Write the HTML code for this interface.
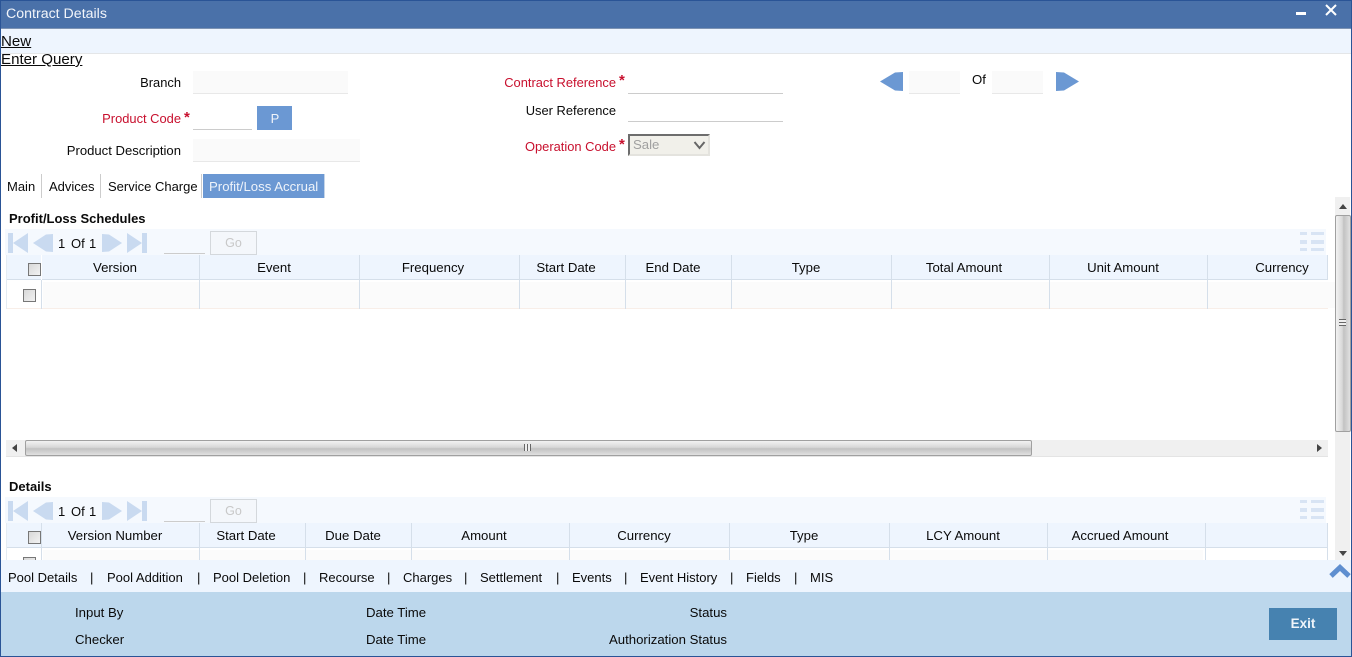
<!DOCTYPE html>
<html><head><meta charset="utf-8">
<style>
html,body{margin:0;padding:0;width:1352px;height:657px;overflow:hidden;background:#fff}
body{position:relative;font-family:"Liberation Sans",Arial,sans-serif;font-size:13.2px;color:#0a0a0a}
.a,.t,.r,.c{position:absolute}
.t,.r,.c{white-space:nowrap;line-height:18px}
.c{transform:translateX(-50%)}
.red{color:#c8102e}
.lb{font-size:12.9px}
.ft{font-size:13px}
.ast{position:absolute;color:#c8102e;font-size:15px;font-weight:bold;line-height:16px}
.inp{position:absolute;background:#fafafa;border-bottom:1px solid #e8e8e8;box-sizing:border-box}
.line{position:absolute;border-bottom:1px solid #ccc;box-sizing:border-box}
.v{position:absolute;width:1px;background:#d5dfea}
.cb{position:absolute;width:13px;height:13px;box-sizing:border-box;border:1px solid #777;background:linear-gradient(135deg,#d8d8d8,#f2f2f2)}
u{text-decoration:underline}
svg{position:absolute;overflow:visible}
</style></head><body>

<!-- title -->
<div class="a" style="left:0;top:0;width:1352px;height:29px;background:#4a71a9;border-top:1px solid #2a5496;border-bottom:1px solid #7d93b3;box-sizing:border-box"></div>
<div class="t" style="left:6px;top:5px;color:#f2f5fa;font-size:14.2px">Contract Details</div>
<div class="a" style="left:1296px;top:12px;width:10px;height:3px;background:#fff"></div>
<svg style="left:1325px;top:4px" width="12" height="12"><path d="M1 1L11 11M11 1L1 11" stroke="#fff" stroke-width="2"/></svg>

<!-- sub bar -->
<div class="a" style="left:0;top:29px;width:1352px;height:25px;background:#eef5fe;border-bottom:1px solid #e4e6e8;box-sizing:border-box"></div>
<div class="t" style="left:1px;top:33px;font-size:15.1px;line-height:18px"><u>New</u></div>
<div class="t" style="left:1px;top:51px;font-size:15.1px;line-height:18px"><u>Enter Query</u></div>

<!-- left form -->
<div class="r lb" style="right:1171px;top:74px">Branch</div>
<div class="inp" style="left:193px;top:71px;width:155px;height:23px"></div>
<div class="r red lb" style="right:1171px;top:110px">Product Code</div>
<div class="ast" style="left:184px;top:110px">*</div>
<div class="line" style="left:193px;top:108px;width:59px;height:22px"></div>
<div class="a" style="left:257px;top:106px;width:35px;height:24px;background:#6b98d3"></div>
<div class="c" style="left:275px;top:110px;color:#f0f4fa;font-size:13px">P</div>
<div class="r" style="right:1171px;top:142px;font-size:13.1px">Product Description</div>
<div class="inp" style="left:193px;top:139px;width:167px;height:23px"></div>

<!-- centre form -->
<div class="r red lb" style="right:736px;top:74px">Contract Reference</div>
<div class="ast" style="left:619px;top:73px">*</div>
<div class="line" style="left:628px;top:71px;width:155px;height:23px"></div>
<div class="r lb" style="right:736px;top:102px">User Reference</div>
<div class="line" style="left:628px;top:99px;width:155px;height:23px"></div>
<div class="r red lb" style="right:736px;top:138px">Operation Code</div>
<div class="ast" style="left:619px;top:137px">*</div>
<div class="a" style="left:628px;top:134px;width:82px;height:22px;box-sizing:border-box;background:#f1f0ea;border:2px solid #e4e3de;border-top-color:#6d6d6d;border-left-color:#6d6d6d"></div>
<div class="t" style="left:633px;top:136px;color:#a0a0a0">Sale</div>
<svg style="left:693px;top:140px" width="13" height="11"><path d="M1.5 2L6.5 8L11.5 2" fill="none" stroke="#666" stroke-width="2"/></svg>

<!-- record nav -->
<svg style="left:880px;top:72px" width="23" height="19"><path d="M0 9.5L15 .5L23 0V19L15 18.5Z" fill="#6b98d3"/></svg>
<div class="inp" style="left:909px;top:71px;width:51px;height:23px"></div>
<div class="t" style="left:972px;top:71px">Of</div>
<div class="inp" style="left:992px;top:71px;width:51px;height:23px"></div>
<svg style="left:1056px;top:72px" width="23" height="19"><path d="M0 0L8 .5L23 9.5L8 18.5L0 19Z" fill="#6b98d3"/></svg>

<!-- tabs -->
<div class="t ft" style="left:7px;top:178px">Main</div>
<div class="v" style="left:41px;top:174px;height:24px;background:#ccc"></div>
<div class="t ft" style="left:49px;top:178px">Advices</div>
<div class="v" style="left:100px;top:174px;height:24px;background:#ccc"></div>
<div class="t ft" style="left:108px;top:178px">Service Charge</div>
<div class="v" style="left:201px;top:174px;height:24px;background:#ccc"></div>
<div class="a" style="left:203px;top:174px;width:122px;height:24px;background:#6b98d3;border-right:1px solid #c5d5e8;box-sizing:border-box"></div>
<div class="t" style="left:209px;top:178px;color:#eef3fa">Profit/Loss Accrual</div>

<!-- Schedules -->
<div class="t" style="left:9px;top:210px;font-weight:bold;font-size:13px">Profit/Loss Schedules</div>
<div class="a" style="left:5px;top:229px;width:1321px;height:26px;background:#f5f9fe"></div>
<svg style="left:8px;top:233px" width="140" height="21" fill="#c9daf0"><path d="M0 0H5V20H0ZM5 10L20 0V20Z"/><path d="M25 10L38 1.5L45 1V19L38 18.5Z"/><path d="M94 1L101 1.5L114 10L101 18.5L94 19Z"/><path d="M119 0L134 10L119 20ZM134 0H139V20H134Z"/></svg>
<div class="t" style="left:58px;top:235px;font-size:13px">1</div><div class="t" style="left:71px;top:235px;font-size:13px">Of</div><div class="t" style="left:89px;top:235px;font-size:13px">1</div>
<div class="line" style="left:164px;top:233px;width:41px;height:21px"></div>
<div class="a" style="left:210px;top:231px;width:47px;height:24px;box-sizing:border-box;background:#f4f7fb;border:1px solid #d4d8dc"></div>
<div class="c" style="left:233.5px;top:234px;color:#c8c8c8;font-size:12.5px">Go</div>
<svg style="left:1300px;top:232px" width="25" height="20" fill="#d8e4f4"><path d="M0 0H7V3H0ZM11 0H24V3H11ZM0 8H7V12H0ZM11 8H24V12H11ZM0 16H7V19H0ZM11 16H24V19H11Z"/></svg>

<div class="a" style="left:6px;top:255px;width:1322px;height:25px;background:#eef5fe;border-bottom:1px solid #d5dfea;box-sizing:border-box"></div>
<div class="a" style="left:43px;top:282px;width:1292px;height:26px;background:#fbfbfb"></div>
<div class="a" style="left:6px;top:308px;width:1322px;height:1px;background:#f8eee8"></div>
<div class="v" style="left:6px;top:255px;height:54px;background:#e4ebf2"></div>
<div class="v" style="left:41px;top:255px;height:54px;background:#fff"></div><div class="v" style="left:41px;top:280px;height:29px"></div>
<div class="v" style="left:199px;top:255px;height:54px"></div>
<div class="v" style="left:359px;top:255px;height:54px"></div>
<div class="v" style="left:519px;top:255px;height:54px"></div>
<div class="v" style="left:625px;top:255px;height:54px"></div>
<div class="v" style="left:731px;top:255px;height:54px"></div>
<div class="v" style="left:891px;top:255px;height:54px"></div>
<div class="v" style="left:1049px;top:255px;height:54px"></div>
<div class="v" style="left:1207px;top:255px;height:54px"></div>
<div class="v" style="left:1327px;top:255px;height:25px"></div>
<div class="cb" style="left:28px;top:263px"></div>
<div class="cb" style="left:23px;top:289px"></div>
<div class="c" style="left:115px;top:259px">Version</div>
<div class="c" style="left:274px;top:259px">Event</div>
<div class="c" style="left:433px;top:259px">Frequency</div>
<div class="c" style="left:566px;top:259px">Start Date</div>
<div class="c" style="left:673px;top:259px">End Date</div>
<div class="c" style="left:806px;top:259px">Type</div>
<div class="c" style="left:964px;top:259px">Total Amount</div>
<div class="c" style="left:1123px;top:259px">Unit Amount</div>
<div class="c" style="left:1282px;top:259px">Currency</div>

<!-- horizontal scrollbar -->
<div class="a" style="left:6px;top:440px;width:1322px;height:17px;background:#f0f0f0;border-bottom:1px solid #e4e4e4;box-sizing:border-box"></div>
<svg style="left:12px;top:444px" width="6" height="8"><path d="M0 4L5 0V8Z" fill="#444"/></svg>
<svg style="left:1317px;top:444px" width="6" height="8"><path d="M5 4L0 0V8Z" fill="#444"/></svg>
<div class="a" style="left:25px;top:440px;width:1007px;height:16px;box-sizing:border-box;border:1px solid #a0a0a0;border-radius:2px;background:linear-gradient(#f2f2f2,#d8d8d8 45%,#c2c2c2 55%,#e0e0e0)"></div>
<div class="a" style="left:524px;top:444px;width:7px;height:7px;background:repeating-linear-gradient(90deg,#666 0,#666 1px,#eee 1px,#eee 3px)"></div>

<!-- Details -->
<div class="t" style="left:9px;top:478px;font-weight:bold;font-size:13px">Details</div>
<div class="a" style="left:5px;top:497px;width:1321px;height:26px;background:#f5f9fe"></div>
<svg style="left:8px;top:501px" width="140" height="21" fill="#c9daf0"><path d="M0 0H5V20H0ZM5 10L20 0V20Z"/><path d="M25 10L38 1.5L45 1V19L38 18.5Z"/><path d="M94 1L101 1.5L114 10L101 18.5L94 19Z"/><path d="M119 0L134 10L119 20ZM134 0H139V20H134Z"/></svg>
<div class="t" style="left:58px;top:503px;font-size:13px">1</div><div class="t" style="left:71px;top:503px;font-size:13px">Of</div><div class="t" style="left:89px;top:503px;font-size:13px">1</div>
<div class="line" style="left:164px;top:501px;width:41px;height:21px"></div>
<div class="a" style="left:210px;top:499px;width:47px;height:24px;box-sizing:border-box;background:#f4f7fb;border:1px solid #d4d8dc"></div>
<div class="c" style="left:233.5px;top:502px;color:#c8c8c8;font-size:12.5px">Go</div>
<svg style="left:1300px;top:500px" width="25" height="20" fill="#d8e4f4"><path d="M0 0H7V3H0ZM11 0H24V3H11ZM0 8H7V12H0ZM11 8H24V12H11ZM0 16H7V19H0ZM11 16H24V19H11Z"/></svg>

<div class="a" style="left:6px;top:523px;width:1322px;height:25px;background:#eef5fe;border-bottom:1px solid #d5dfea;box-sizing:border-box"></div>
<div class="a" style="left:43px;top:550px;width:1160px;height:10px;background:#fbfbfb"></div>
<div class="v" style="left:6px;top:523px;height:37px;background:#e4ebf2"></div>
<div class="v" style="left:41px;top:523px;height:37px"></div>
<div class="v" style="left:199px;top:523px;height:37px"></div>
<div class="v" style="left:305px;top:523px;height:37px"></div>
<div class="v" style="left:411px;top:523px;height:37px"></div>
<div class="v" style="left:569px;top:523px;height:37px"></div>
<div class="v" style="left:729px;top:523px;height:37px"></div>
<div class="v" style="left:889px;top:523px;height:37px"></div>
<div class="v" style="left:1047px;top:523px;height:37px"></div>
<div class="v" style="left:1205px;top:523px;height:37px"></div>
<div class="v" style="left:1327px;top:523px;height:37px"></div>
<div class="cb" style="left:28px;top:531px"></div>
<div class="cb" style="left:23px;top:557px"></div>
<div class="c" style="left:115px;top:527px">Version Number</div>
<div class="c" style="left:246px;top:527px">Start Date</div>
<div class="c" style="left:353px;top:527px">Due Date</div>
<div class="c" style="left:484px;top:527px">Amount</div>
<div class="c" style="left:644px;top:527px">Currency</div>
<div class="c" style="left:804px;top:527px">Type</div>
<div class="c" style="left:963px;top:527px">LCY Amount</div>
<div class="c" style="left:1120px;top:527px">Accrued Amount</div>

<!-- vertical scrollbar -->
<div class="a" style="left:1335px;top:197px;width:15px;height:363px;background:#f0f0f0"></div>
<svg style="left:1339px;top:204px" width="8" height="5"><path d="M4 0L8 5H0Z" fill="#444"/></svg>
<svg style="left:1339px;top:551px" width="8" height="5"><path d="M4 5L8 0H0Z" fill="#444"/></svg>
<div class="a" style="left:1335px;top:215px;width:16px;height:217px;box-sizing:border-box;border:1px solid #a0a0a0;border-radius:2px;background:linear-gradient(90deg,#f2f2f2,#d8d8d8 45%,#c2c2c2 55%,#e0e0e0)"></div>
<div class="a" style="left:1339px;top:319px;width:7px;height:7px;background:repeating-linear-gradient(0deg,#666 0,#666 1px,#eee 1px,#eee 3px)"></div>

<!-- footer links -->
<div class="a" style="left:0;top:560px;width:1352px;height:32px;background:#eef5fe"></div>
<div class="t ft" style="left:8px;top:569px">Pool Details</div><div class="t" style="left:90px;top:569px">|</div>
<div class="t ft" style="left:107px;top:569px">Pool Addition</div><div class="t" style="left:197px;top:569px">|</div>
<div class="t ft" style="left:213px;top:569px">Pool Deletion</div><div class="t" style="left:303px;top:569px">|</div>
<div class="t ft" style="left:319px;top:569px">Recourse</div><div class="t" style="left:387px;top:569px">|</div>
<div class="t ft" style="left:403px;top:569px">Charges</div><div class="t" style="left:464px;top:569px">|</div>
<div class="t ft" style="left:480px;top:569px">Settlement</div><div class="t" style="left:556px;top:569px">|</div>
<div class="t ft" style="left:572px;top:569px">Events</div><div class="t" style="left:624px;top:569px">|</div>
<div class="t ft" style="left:640px;top:569px">Event History</div><div class="t" style="left:730px;top:569px">|</div>
<div class="t ft" style="left:746px;top:569px">Fields</div><div class="t" style="left:794px;top:569px">|</div>
<div class="t ft" style="left:810px;top:569px">MIS</div>
<svg style="left:1329px;top:564px" width="22" height="15"><path d="M2 12L11 3.5L20 12" fill="none" stroke="#5f8fd0" stroke-width="5"/></svg>

<!-- status panel -->
<div class="a" style="left:0;top:592px;width:1352px;height:65px;background:#bcd7ec;border-bottom:1px solid #2a5496;box-sizing:border-box"></div>
<div class="t" style="left:75px;top:604px">Input By</div>
<div class="t" style="left:75px;top:631px">Checker</div>
<div class="t" style="left:366px;top:604px">Date Time</div>
<div class="t" style="left:366px;top:631px">Date Time</div>
<div class="r" style="right:625px;top:604px">Status</div>
<div class="r" style="right:625px;top:631px">Authorization Status</div>
<div class="a" style="left:1269px;top:608px;width:68px;height:32px;background:#4682b0"></div>
<div class="c" style="left:1303px;top:615px;color:#f0f5fa;font-weight:bold;font-size:13.5px">Exit</div>

<!-- window edges -->
<div class="a" style="left:0;top:0;width:1px;height:657px;background:#2a5496"></div>
<div class="a" style="left:1351px;top:0;width:1px;height:657px;background:#2a5496"></div>
</body></html>
